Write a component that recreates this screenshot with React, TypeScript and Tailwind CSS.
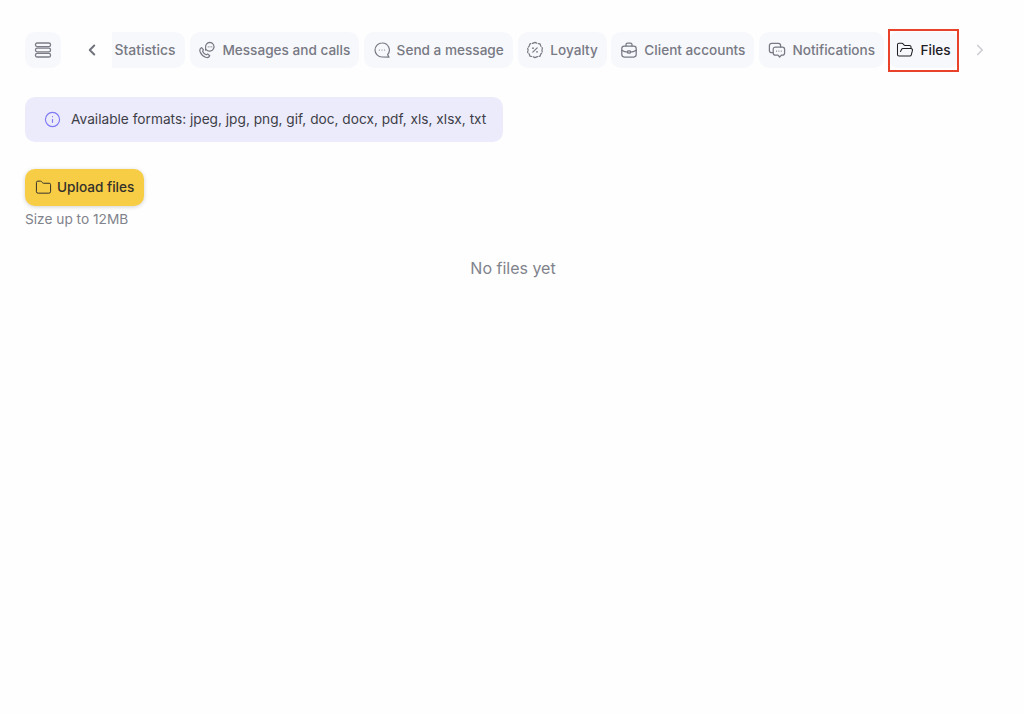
import React from 'react';
import { ChevronLeft, ChevronRight, Info, Folder, FolderOpen } from 'lucide-react';

const font = { fontFamily: 'Inter, "Noto Sans", sans-serif' };

const PhoneChat = () => (
  <svg width="18" height="18" viewBox="0 0 18 18" fill="none" stroke="currentColor" strokeWidth="1.2" strokeLinecap="round" strokeLinejoin="round">
    <path d="M3.6 6.6 C2 7.6 1.4 9.2 2.2 11 C3.2 13.4 5.2 15.4 7.6 16.3 C9.4 17 11 16.4 11.8 14.8 L9.6 13 L8.2 13.8 C6.6 13.2 5.2 11.7 4.6 10.2 L5.5 8.8 Z" />
    <path d="M11.6 1.4 A4.4 4.4 0 1 1 8 8.3 L7.6 9.2 L7.6 6.4 A4.4 4.4 0 0 1 11.6 1.4 Z" />
    <path d="M10.2 5.8h.01M12 5.8h.01M13.8 5.8h.01" />
  </svg>
);

const ChatDots = () => (
  <svg width="18" height="18" viewBox="0 0 18 18" fill="none" stroke="currentColor" strokeWidth="1.2" strokeLinecap="round" strokeLinejoin="round">
    <path d="M9 2 A7 7 0 1 0 9 16 L16 16.2 L14.6 13.6 A7 7 0 0 0 9 2 Z" />
    <path d="M6.4 9h.01M9 9h.01M11.6 9h.01" />
  </svg>
);

const PercentBadge = () => (
  <svg width="18" height="18" viewBox="0 0 18 18" fill="none" stroke="currentColor" strokeWidth="1.2" strokeLinecap="round" strokeLinejoin="round">
    <path d="M6.6 2.4 L9 1.4 L11.4 2.4 L14 2.8 L14.8 5 L16.4 7 L15.9 9.4 L16.4 11.4 L14.8 13 L14 15.2 L11.4 15.6 L9 16.6 L6.6 15.6 L4 15.2 L3.2 13 L1.6 11.4 L2.1 9 L1.6 7 L3.2 5 L4 2.8 Z" strokeDasharray="4.5 1.6" />
    <path d="M6.8 11.2 L11.2 6.8" />
    <path d="M7 7.2h.01M11 10.8h.01" strokeWidth="1.8" />
  </svg>
);

const Case = () => (
  <svg width="18" height="18" viewBox="0 0 18 18" fill="none" stroke="currentColor" strokeWidth="1.25" strokeLinecap="round" strokeLinejoin="round">
    <rect x="1.8" y="5" width="14.4" height="11" rx="2.4" />
    <path d="M6 5 V3.6 A1.6 1.6 0 0 1 7.6 2 H10.4 A1.6 1.6 0 0 1 12 3.6 V5" />
    <path d="M1.8 9.4 C4 10.6 6.2 11 7.6 11 M16.2 9.4 C14 10.6 11.8 11 10.4 11" />
    <rect x="7.6" y="9.8" width="2.8" height="2.4" rx=".6" />
  </svg>
);

const Bubbles = () => (
  <svg width="18" height="18" viewBox="0 0 18 18" fill="none" stroke="currentColor" strokeWidth="1.25" strokeLinecap="round" strokeLinejoin="round">
    <path d="M5 11.6 H3.6 A2.2 2.2 0 0 1 1.4 9.4 V4.6 A2.2 2.2 0 0 1 3.6 2.4 H10.4 A2.2 2.2 0 0 1 12.6 4.6 V6" />
    <path d="M7.4 6 H14.4 A2.2 2.2 0 0 1 16.6 8.2 V12 A2.2 2.2 0 0 1 14.4 14.2 H13.4 L11.6 16 L10 14.2 H7.4 A2.2 2.2 0 0 1 5.2 12 V8.2 A2.2 2.2 0 0 1 7.4 6 Z" />
    <path d="M8.6 10.1h.01M10.9 10.1h.01M13.2 10.1h.01" />
  </svg>
);

const tabs = [
  { label: 'Messages and calls', icon: <PhoneChat />, width: 'w-[169px]' },
  { label: 'Send a message', icon: <ChatDots />, width: 'w-[149px]' },
  { label: 'Loyalty', icon: <PercentBadge />, width: 'w-[89px]' },
  { label: 'Client accounts', icon: <Case />, width: 'w-[143px]' },
  { label: 'Notifications', icon: <Bubbles />, width: 'w-[125px]' },
];

export default function App() {
  return (
    <div className="min-h-[714px] bg-[#fefefe] pl-[25px] pr-[23px] pt-[32px] text-[13.7px] leading-[20px]" style={font}>
      {/* Top nav */}
      <div className="flex items-center">
        <button className="flex h-[36px] w-[36px] shrink-0 items-center justify-center rounded-[10px] bg-[#f7f8fb] text-[#7b7d87]">
          <svg width="18" height="16" viewBox="0 0 18 16" fill="none" stroke="currentColor" strokeWidth="1.3">
            <rect x="1.5" y="1" width="15" height="3.6" rx="1.6" />
            <rect x="1.5" y="6.2" width="15" height="3.6" rx="1.6" />
            <rect x="1.5" y="11.4" width="15" height="3.6" rx="1.6" />
          </svg>
        </button>
        <div className="flex w-[51px] shrink-0 items-center justify-center pl-[10px] text-[#70727c]">
          <ChevronLeft size={18} strokeWidth={2.6} />
        </div>

        <div className="flex gap-[4.85px] text-[13.6px] font-medium text-[#777984]">
          <div className="flex h-[36px] w-[73px] shrink-0 items-center rounded-r-[10px] bg-[#f7f8fb] pl-[2.5px] pb-[1px] text-[13.9px] whitespace-nowrap">Statistics</div>
          {tabs.map((t) => (
            <div key={t.label} className={`flex h-[36px] shrink-0 items-center justify-center gap-[6px] rounded-[10px] bg-[#f7f8fb] whitespace-nowrap ${t.width}`}>
              {t.icon}
              <span className="pb-[1px]">{t.label}</span>
            </div>
          ))}
          <div className="relative -ml-[1px] flex h-[36px] w-[71px] shrink-0 items-center justify-center gap-[6px] rounded-[10px] bg-[#f7f8fb] text-[#1f2026]">
            <FolderOpen size={18} strokeWidth={1.4} />
            <span className="pb-[1px]">Files</span>
            <div className="absolute -top-[3px] -bottom-[4px] left-0 right-0 border-2 border-[#e8432a]" />
          </div>
        </div>

        <div className="flex w-[42px] shrink-0 justify-center text-[#cdced3]">
          <ChevronRight size={18} strokeWidth={2.2} />
        </div>
      </div>

      {/* Formats notice */}
      <div className="mt-[29px] flex h-[45px] w-[478px] items-center gap-[10px] rounded-[10px] bg-[#ecebfb] pl-[19px] text-[#3d3e47]">
        <Info size={17} strokeWidth={1.6} className="text-[#7d78f5]" />
        <span className="pb-[1px]">Available formats: jpeg, jpg, png, gif, doc, docx, pdf, xls, xlsx, txt</span>
      </div>

      {/* Upload */}
      <button className="mt-[27px] flex h-[37px] w-[119px] items-center gap-[5px] rounded-[10px] bg-[#f8cd46] pl-[10px] text-[13.6px] font-medium text-[#33302a] shadow-[0_1px_4px_rgba(0,0,0,0.18)]">
        <Folder size={17} strokeWidth={1.4} />
        <span className="pb-[1px]">Upload files</span>
      </button>
      <div className="mt-[3px] text-[#81838c]">Size up to 12MB</div>

      <div className="mt-[27px] text-center text-[16px] leading-[24px] text-[#81838c]">No files yet</div>
    </div>
  );
}
